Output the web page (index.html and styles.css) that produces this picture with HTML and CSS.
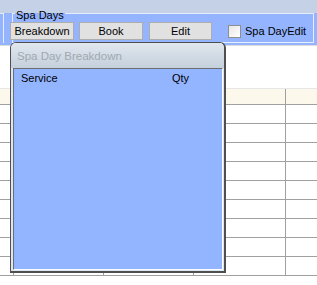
FILE: index.html
```html
<!DOCTYPE html>
<html>
<head>
<meta charset="utf-8">
<link rel="stylesheet" href="styles.css">
</head>
<body>
<div class="toolbar">
  <div class="leftgroup"></div>
  <fieldset class="group">
    <legend>Spa Days</legend>
    <div class="btnrow">
      <span class="btn">Breakdown</span>
      <span class="btn">Book</span>
      <span class="btn btn-edit">Edit</span>
      <span class="check"><span class="box"></span><span class="check-label">Spa DayEdit</span></span>
    </div>
  </fieldset>
</div>
<div class="grid">
  <div class="grid-top"></div>
  <div class="row header"><span class="c c0"></span><span class="c c1"></span><span class="c c2"></span><span class="c c3"></span><span class="c c4"></span></div>
  <div class="row"><span class="c c0"></span><span class="c c1"></span><span class="c c2"></span><span class="c c3"></span><span class="c c4"></span></div>
  <div class="row"><span class="c c0"></span><span class="c c1"></span><span class="c c2"></span><span class="c c3"></span><span class="c c4"></span></div>
  <div class="row"><span class="c c0"></span><span class="c c1"></span><span class="c c2"></span><span class="c c3"></span><span class="c c4"></span></div>
  <div class="row"><span class="c c0"></span><span class="c c1"></span><span class="c c2"></span><span class="c c3"></span><span class="c c4"></span></div>
  <div class="row"><span class="c c0"></span><span class="c c1"></span><span class="c c2"></span><span class="c c3"></span><span class="c c4"></span></div>
  <div class="row"><span class="c c0"></span><span class="c c1"></span><span class="c c2"></span><span class="c c3"></span><span class="c c4"></span></div>
  <div class="row"><span class="c c0"></span><span class="c c1"></span><span class="c c2"></span><span class="c c3"></span><span class="c c4"></span></div>
  <div class="row"><span class="c c0"></span><span class="c c1"></span><span class="c c2"></span><span class="c c3"></span><span class="c c4"></span></div>
  <div class="row"><span class="c c0"></span><span class="c c1"></span><span class="c c2"></span><span class="c c3"></span><span class="c c4"></span></div>
</div>
<div class="dialog">
  <div class="titlebar">Spa Day Breakdown</div>
  <div class="dialog-body">
    <div class="panel">
      <div class="panel-head"><span class="col-service">Service</span><span class="col-qty">Qty</span></div>
    </div>
  </div>
</div>
</body>
</html>
```
FILE: styles.css
```css
html, body {
  margin: 0;
  padding: 0;
  width: 317px;
  height: 285px;
  overflow: hidden;
  background: #ffffff;
  font-family: "Liberation Sans", Arial, sans-serif;
  font-size: 11px;
  color: #000;
}

.toolbar {
  height: 45px;
  box-sizing: border-box;
  background: linear-gradient(to bottom, #c4d1e7 0, #c4d1e7 13px, #94b4ff 13px, #94b4ff 100%);
  display: flex;
  align-items: flex-start;
}

.leftgroup {
  width: 4px;
  height: 30px;
  margin-top: 13px;
  border-top: 1px solid #e4ecff;
  border-right: 1px solid #e4ecff;
  box-sizing: border-box;
  flex: none;
}

.group {
  margin: 5px 3px 0 8px;
  padding: 0;
  border: 1px solid #e4ecff;
  height: 38px;
  box-sizing: border-box;
  flex: 1;
  min-width: 0;
}

.group legend {
  padding: 4px 1px 0 1px;
  margin-left: 2px;
  font-size: 11px;
  line-height: 13px;
}

.btnrow {
  display: flex;
  align-items: center;
  margin-left: -3px;
  margin-top: 0;
}

.btn {
  width: 64px;
  height: 18px;
  box-sizing: border-box;
  background: #e1e1e1;
  border: 1px solid #adadad;
  display: flex;
  align-items: center;
  justify-content: center;
  margin-right: 5px;
  line-height: 14px;
}

.btn-edit {
  width: 63px;
  margin-left: 1px;
  margin-right: 16px;
}

.check {
  display: flex;
  align-items: center;
}

.box {
  width: 13px;
  height: 13px;
  box-sizing: border-box;
  border: 1px solid #8f8f8f;
  background: linear-gradient(to bottom right, #e6e6e6, #ffffff);
  margin-right: 4px;
}

.check-label {
  line-height: 14px;
}

.grid {
  display: flex;
  flex-direction: column;
}

.grid-top {
  height: 42px;
  border-top: 1px solid #dcdcdc;
  border-bottom: 1px solid #e6e6e6;
}

.row {
  display: flex;
  height: 19px;
  box-sizing: border-box;
  border-bottom: 1px solid #a0a0a0;
}

.row.header {
  height: 16px;
  background: #fdf8ec;
}

.c {
  box-sizing: border-box;
  border-right: 1px solid #a0a0a0;
  height: 100%;
  flex: none;
}

.c0 { width: 14px; }
.c1 { width: 90px; }
.c2 { width: 90px; }
.c3 { width: 92px; }
.c4 { flex: 1; border-right: none; }

.dialog {
  position: absolute;
  left: 10px;
  top: 42px;
  width: 216px;
  height: 231px;
  box-sizing: border-box;
  border: 1px solid #4f4f4f;
  border-right-width: 2px;
  border-bottom-width: 2px;
  border-radius: 6px 6px 0 0;
  background: #e2eaf6;
  display: flex;
  flex-direction: column;
  overflow: hidden;
}

.titlebar {
  height: 25px;
  flex: none;
  box-sizing: border-box;
  padding-left: 6px;
  padding-top: 7px;
  line-height: 13px;
  font-size: 11.5px;
  color: #a0a8b1;
  background: linear-gradient(to bottom, #e1e7ee, #c4d0dc);
}

.dialog-body {
  flex: 1;
  padding: 0 1px 1px 2px;
  display: flex;
  background: #dde7f4;
}

.panel {
  flex: 1;
  background: #93b4ff;
  border-top: 1px solid #6e6e6e;
  border-left: 1px solid #6e6e6e;
  border-right: 1px solid #ffffff;
  border-bottom: 1px solid #ffffff;
}

.panel-head {
  display: flex;
  padding: 3px 0 0 7px;
  line-height: 13px;
}

.col-service {
  width: 151px;
}
```
